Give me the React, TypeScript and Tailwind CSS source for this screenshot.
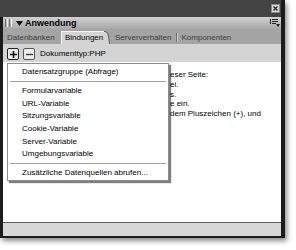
import React from "react";

// only the ends of the help text show to the right of the open menu
const bodyLines = [
  "eser Seite:",
  "ei.",
  "s.",
  "e ein.",
  "dem Pluszeichen (+), und",
];

type MenuEntry = { label: string } | { sep: true };

const menu: MenuEntry[] = [
  { label: "Datensatzgruppe (Abfrage)" },
  { sep: true },
  { label: "Formularvariable" },
  { label: "URL-Variable" },
  { label: "Sitzungsvariable" },
  { label: "Cookie-Variable" },
  { label: "Server-Variable" },
  { label: "Umgebungsvariable" },
  { sep: true },
  { label: "Zusätzliche Datenquellen abrufen..." },
];

function CloseButton() {
  return (
    <svg width="9" height="9" viewBox="0 0 9 9">
      <rect x="0.5" y="0.5" width="8" height="8" fill="#d9d9d9" stroke="#8a8a8a" />
      <path d="M2.5 2.5 L6.5 6.5 M6.5 2.5 L2.5 6.5" stroke="#2a2a2a" strokeWidth="1.4" />
    </svg>
  );
}

function OptionsIcon() {
  return (
    <svg width="10" height="8" viewBox="0 0 10 8">
      <rect x="0" y="0" width="1" height="5" fill="#222" />
      <rect x="2" y="0" width="6" height="1" fill="#222" />
      <rect x="2" y="2" width="6" height="1" fill="#222" />
      <rect x="2" y="4" width="4" height="1" fill="#222" />
      <path d="M6 5 L10 5 L8 8 Z" fill="#222" />
    </svg>
  );
}

export default function App() {
  return (
    <div className="w-[296px] h-[250px] bg-white font-['Liberation_Sans',Arial,sans-serif] text-[8px] text-black">
      <div className="w-[285px] h-[238px] flex flex-col bg-[#1c1c1c] shadow-[2px_3px_5px_rgba(0,0,0,0.45)]">
        {/* floating window title */}
        <div className="h-[17px] shrink-0 mr-[4px] bg-[#434343] flex justify-end items-start pt-[4px] pr-[1px]">
          <CloseButton />
        </div>

        <div className="flex-1 min-h-0 flex flex-col ml-[3px] mr-[4px] mb-[2px]">
          {/* panel header */}
          <div className="h-[12px] shrink-0 flex items-center bg-gradient-to-b from-[#d0d0d0] to-[#a8a8a8] pl-[2px] pr-[1px]">
            <div className="flex gap-[1px] h-[8px]">
              <span className="w-[1px] bg-[#6e6e6e]" />
              <span className="w-[1px] bg-[#f2f2f2]" />
              <span className="w-[1px] bg-[#6e6e6e]" />
              <span className="w-[1px] bg-[#f2f2f2]" />
            </div>
            <svg width="7" height="5" viewBox="0 0 7 5" className="ml-[4px]">
              <path d="M0 0 L7 0 L3.5 5 Z" fill="#111" />
            </svg>
            <span className="ml-[2px] text-[9px] font-bold leading-none">Anwendung</span>
            <div className="flex-1" />
            <OptionsIcon />
          </div>

          {/* tabs */}
          <div className="h-[15px] shrink-0 flex items-end bg-[#a4a4a4] pl-[4px] text-[#3a3a3a]">
            <div className="w-[54px] h-[13px] flex items-center">Datenbanken</div>
            <div className="h-[13px] flex">
              <div className="w-[43px] h-[13px] bg-[#d4d4d4] border-l border-t border-[#f4f4f4] flex items-center pl-[3px] text-black whitespace-nowrap">
                Bindungen
              </div>
              <svg width="6" height="13" viewBox="0 0 6 13">
                <path d="M0 0 L1 0 Q3 0 4 3 L6 13 L0 13 Z" fill="#d4d4d4" />
                <path d="M0 0.5 L1 0.5 Q3 0.5 4 3 L5.8 13" stroke="#5a5a5a" fill="none" />
              </svg>
            </div>
            <div className="ml-[5px] h-[13px] flex items-center">Serververhalten</div>
            <div className="ml-[5px] mb-[2px] flex h-[9px] self-end">
              <span className="w-[1px] bg-[#6a6a6a]" />
              <span className="w-[1px] bg-[#d0d0d0]" />
            </div>
            <div className="ml-[3px] h-[13px] flex items-center">Komponenten</div>
          </div>

          {/* toolbar */}
          <div className="h-[18px] shrink-0 flex items-start pt-[4px] pl-[4px] bg-[#d4d4d4]">
            <div className="w-[12px] h-[12px] rounded-[2px] border-[1.5px] border-[#1e1e1e] bg-[#ececec] flex items-center justify-center">
              <svg width="7" height="7" viewBox="0 0 7 7">
                <path d="M3.5 0 V7 M0 3.5 H7" stroke="#111" strokeWidth="1.6" />
              </svg>
            </div>
            <div className="ml-[4px] w-[12px] h-[12px] rounded-[2px] border border-[#555] bg-[#ececec] flex items-center justify-center">
              <svg width="7" height="7" viewBox="0 0 7 7">
                <path d="M0 3.5 H7" stroke="#333" strokeWidth="1.3" />
              </svg>
            </div>
            <span className="ml-[5px] h-[12px] flex items-center">Dokumenttyp:PHP</span>
          </div>

          {/* content */}
          <div className="flex-1 min-h-0 relative bg-white pt-[8px] pl-[167px] overflow-hidden">
            {bodyLines.map((line) => (
              <div key={line} className="whitespace-nowrap leading-[9.8px]">
                {line}
              </div>
            ))}

            <div className="absolute left-[4px] top-[1px] w-[162px] h-[118px] bg-white border border-[#8c8c8c] shadow-[2px_2px_1px_rgba(0,0,0,0.5)] pt-[2px]">
              {menu.map((item, i) =>
                "sep" in item ? (
                  <div key={i} className="h-[6.4px] flex items-center px-[2px]">
                    <div className="h-[1px] w-full bg-[#a0a0a0]" />
                  </div>
                ) : (
                  <div key={i} className="h-[12.6px] flex items-center pl-[14px] whitespace-nowrap">
                    {item.label}
                  </div>
                )
              )}
            </div>
          </div>

          {/* status strip */}
          <div className="h-[14px] shrink-0 border-t border-[#5e5e5e] bg-[#d7d7d7]" />
        </div>
      </div>
    </div>
  );
}
